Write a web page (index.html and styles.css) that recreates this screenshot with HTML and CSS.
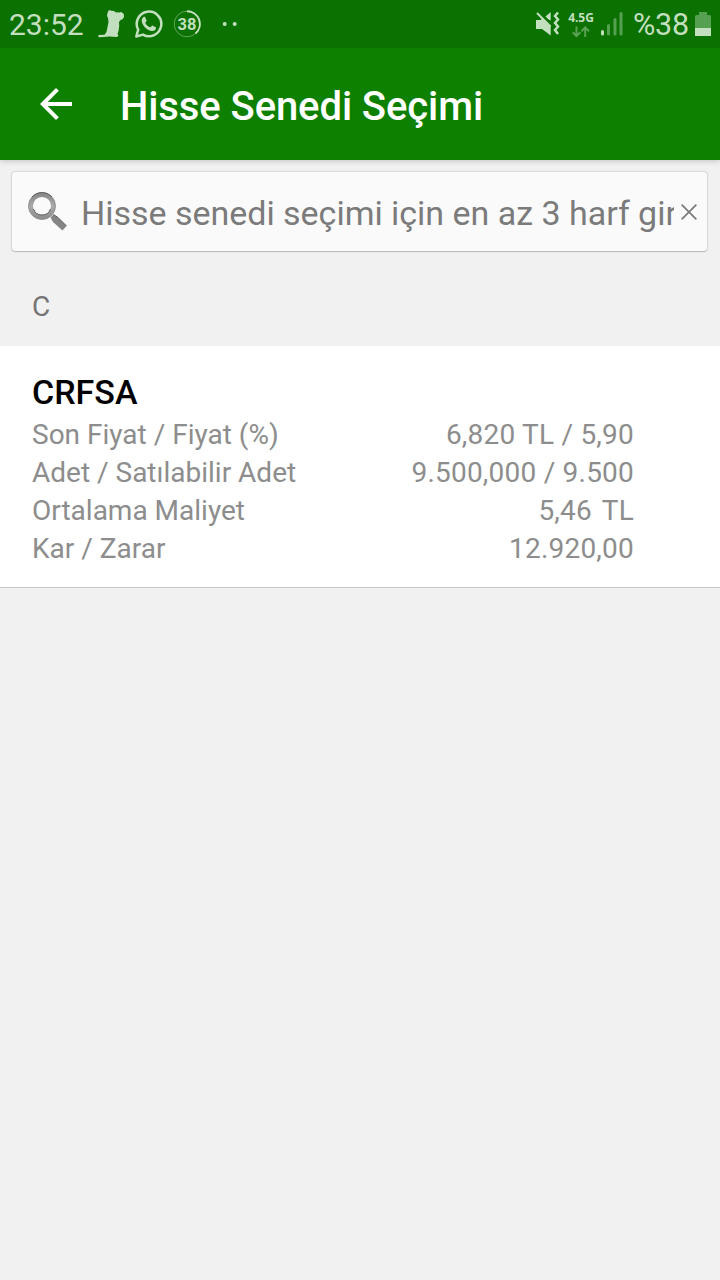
FILE: index.html
```html
<!DOCTYPE html>
<html lang="tr">
<head>
    <meta charset="UTF-8">
    <meta name="viewport" content="width=device-width, initial-scale=1.0">
    <title>Hisse Senedi Seçimi</title>
    <link rel="stylesheet" href="styles.css">
</head>
<body>

<!-- Durum çubuğu -->
<div class="status-bar">
    <span class="clock">23:52</span>
    <svg class="icon-animal" width="28" height="28" viewBox="0 0 28 28">
        <path d="M10.500 .8 L11.500 0 L13 .8 L16 1 L17.500 2.200 L21 2.500 L23.500 2 L25.800 4 L26 7 L24.500 9.300 L22.500 10 L21 12 L21.200 16 L20.500 21 L19.500 24 L20.500 25.500 L19 27 L11 26.500 L6 27 L1 27.300 L0 25.800 L1 25 L6.500 24.700 L8.500 22 L9.500 17 L10.500 12 L10 8 L9 6 L9.500 3 Z"/>
    </svg>
    <svg class="icon-whatsapp" width="30" height="30" viewBox="0 0 30 30">
        <path class="line" d="M2.300 27.500 L4.200 20.700 A12.300 12.300 0 1 1 9 25.600 Z"/>
        <path d="M10.500 7.800 C9.500 7.700 7.400 9.500 7.700 12 C8.200 16.800 13.600 21.800 18 22 C20.500 22.100 22.300 20.200 22.100 18.400 L18.400 16.500 C17.600 16.400 17 18.400 16 18.300 C14.300 18 11.600 15.200 11.300 13.800 C11.500 13 12.800 12.500 12.600 11.600 L11.200 8.200 C11 7.900 10.800 7.800 10.500 7.800 Z"/>
    </svg>
    <span class="counter">
        <svg width="28" height="28" viewBox="0 0 28 28">
            <circle class="ring" cx="14" cy="14" r="12.800"/>
            <path class="ring-part" d="M14 1.200 A12.800 12.800 0 0 1 22.500 23.600"/>
        </svg>
        <span class="counter-text">38</span>
    </span>
    <svg class="icon-dots" width="16" height="6" viewBox="0 0 16 6">
        <circle cx="2.700" cy="3" r="2"/>
        <circle cx="12.700" cy="3" r="2"/>
    </svg>

    <div class="status-right">
        <svg width="25" height="26" viewBox="0 0 25 26">
            <path d="M0 9 H4.500 L6.500 7 L14.700 15 V24.500 L6 18 H0 Z"/>
            <path d="M9.500 5.500 L14.700 1 V9.500 L12.500 8.500 Z"/>
            <path class="slash" d="M1 2 L14.500 15.500"/>
            <path class="wave" d="M22 1.500 L19 5 L22 8.500 L19 12 L22 15.500 L19 19 L22 23"/>
        </svg>
        <div class="network">
            <span class="network-type">4.5G</span>
            <svg class="arrows" width="18" height="12" viewBox="0 0 18 12">
                <path d="M4.500 .5 V10 M.7 6.200 L4.500 10 L8.300 6.200 M13.200 11 V1.500 M9.400 5.300 L13.200 1.500 L17 5.300"/>
            </svg>
        </div>
        <svg class="icon-signal" width="22" height="24" viewBox="0 0 22 24">
            <rect x="0" y="18" width="3" height="5.500" rx="1.500"/>
            <rect class="dim" x="6" y="12" width="3" height="11.500" rx="1.500"/>
            <rect class="dim" x="12.500" y="6" width="3" height="17.500" rx="1.500"/>
            <rect class="dim" x="18.500" y="0" width="3" height="23.500" rx="1.500"/>
        </svg>
        <span class="battery-text">%38</span>
        <svg class="icon-battery" width="16" height="24" viewBox="0 0 16 24">
            <path class="dim" d="M4 0 H12 V3 H14.500 Q16 3 16 4.500 V16 H0 V4.500 Q0 3 1.500 3 H4 Z"/>
            <path d="M0 16 H16 V24 H0 Z"/>
        </svg>
    </div>
</div>

<!-- Başlık -->
<header class="app-bar">
    <svg class="back" width="32" height="32" viewBox="0 0 32 32">
        <path d="M32 14 H7.660 L18.840 2.820 L16 0 L0 16 L16 32 L18.820 29.180 L7.660 18 H32 Z"/>
    </svg>
    <h1>Hisse Senedi Seçimi</h1>
</header>

<!-- Arama kutusu -->
<div class="search">
    <svg class="icon-search" width="40" height="40" viewBox="0 0 40 40">
        <defs>
            <linearGradient id="metal" x1="0" y1="0" x2="0" y2="1">
                <stop offset="0" stop-color="#8a8a8a"/>
                <stop offset=".5" stop-color="#aaa"/>
                <stop offset="1" stop-color="#909090"/>
            </linearGradient>
        </defs>
        <path class="handle" d="M22.500 25.500 L25.500 22.500 L30 25.500 L38.500 34 L34.500 38.500 L25 30 Z"/>
        <path class="handle-edge" d="M25.500 22.500 L30 25.500 L38.500 34"/>
        <circle class="lens" cx="14" cy="14" r="11.300"/>
        <circle class="lens-edge" cx="14" cy="14" r="13.500"/>
        <path class="lens-shade" d="M5.500 17 A9 9 0 0 0 22.500 17"/>
        <path class="lens-shade" d="M4 5 A13.500 13.500 0 0 1 24 5"/>
    </svg>
    <span class="search-text">Hisse senedi seçimi için en az 3 harf gir</span>
    <svg class="clear" width="16" height="16" viewBox="0 0 16 16">
        <path d="M.6 .6 L15.400 15.400 M15.400 .6 L.6 15.400"/>
    </svg>
</div>

<div class="section">C</div>

<!-- Hisse bilgileri -->
<div class="stock">
    <h2>CRFSA</h2>
    <div class="row"><span>Son Fiyat / Fiyat (%)</span><span class="value">6,820 TL / 5,90</span></div>
    <div class="row"><span>Adet / Satılabilir Adet</span><span class="value">9.500,000 / 9.500</span></div>
    <div class="row"><span>Ortalama Maliyet</span><span class="value cost">5,46  TL</span></div>
    <div class="row"><span>Kar / Zarar</span><span class="value">12.920,00</span></div>
</div>

</body>
</html>
```
FILE: styles.css
```css
* {
    margin: 0;
    padding: 0;
    box-sizing: border-box;
}
body {
    font-family: Roboto, sans-serif;
    background-color: #f1f1f1;
    min-height: 100vh;
}
svg {
    display: block;
    flex-shrink: 0;
}
.status-bar {
    display: flex;
    align-items: center;
    height: 48px;
    padding: 0 9px;
    background-color: #0b7100;
    color: #c2dfbf;
    fill: #c2dfbf;
}
.clock {
    width: 75px;
    font-size: 30px;
    line-height: 48px;
    padding-top: 2px;
}
.icon-animal {
    margin-left: 14px;
}
.icon-whatsapp {
    margin-left: 8px;
}
.line {
    fill: none;
    stroke: #c2dfbf;
    stroke-width: 2.500;
    stroke-linejoin: round;
}
.counter {
    display: grid;
    place-items: center;
    margin-left: 9px;
}
.counter > * {
    grid-area: 1 / 1;
}
.counter-text {
    padding-top: 1px;
    font-size: 16.500px;
    font-weight: 700;
    line-height: 28px;
}
.ring {
    fill: none;
    stroke: #5fa45a;
    stroke-width: 1;
}
.ring-part {
    fill: none;
    stroke: #c2dfbf;
    stroke-width: 2;
}
.icon-dots {
    margin-left: 21px;
}
.status-right {
    display: flex;
    align-items: center;
    margin-left: auto;
}
.slash {
    fill: none;
    stroke: #c2dfbf;
    stroke-width: 2;
}
.wave {
    fill: none;
    stroke: #c2dfbf;
    stroke-width: 2.500;
}
.network {
    display: flex;
    flex-direction: column;
    align-items: center;
    width: 28px;
    margin-left: 6px;
    margin-right: 1px;
}
.network-type {
    font-family: "Open Sans", sans-serif;
    font-size: 12px;
    font-weight: 700;
    line-height: 13px;
    letter-spacing: -0.1px;
}
.arrows {
    margin-top: 2px;
    fill: none;
    stroke: #5aa055;
    stroke-width: 2;
}
.icon-signal {
    margin-left: 5px;
}
.dim {
    fill: #56a051;
}
.battery-text {
    width: 56px;
    margin-left: 10px;
    font-size: 30.500px;
    line-height: 48px;
    padding-top: 2px;
    letter-spacing: -0.3px;
}
.icon-battery {
    margin-left: 6px;
}
.app-bar {
    display: flex;
    align-items: center;
    height: 112px;
    padding-left: 40px;
    background-color: #0d8000;
    color: #fff;
    box-shadow: 0 1px 6px rgba(0, 0, 0, 0.2);
    clip-path: inset(0 0 -10px 0);
}
.back {
    fill: #fff;
}
h1 {
    margin-left: 48px;
    padding-top: 5px;
    font-size: 40px;
    font-weight: 500;
    line-height: 49px;
    letter-spacing: -0.1px;
}
.search {
    display: flex;
    align-items: center;
    height: 79px;
    margin: 12px 13px 0 12px;
    padding: 0 10px 0 16px;
    background-color: #fafafa;
    border-radius: 3px;
    box-shadow: 0 0 2px rgba(0, 0, 0, 0.35), 0 1px 1px rgba(0, 0, 0, 0.15);
}
.handle {
    fill: #858585;
}
.handle-edge {
    fill: none;
    stroke: #5c5c5c;
    stroke-width: 1;
}
.lens {
    fill: none;
    stroke: url(#metal);
    stroke-width: 4.500;
}
.lens-edge {
    fill: none;
    stroke: #888;
    stroke-width: 0.800;
}
.lens-shade {
    fill: none;
    stroke: #606060;
    stroke-width: 1;
}
.search-text {
    flex: 1;
    margin-left: 13px;
    overflow: hidden;
    white-space: nowrap;
    color: #7b7b7b;
    font-size: 34px;
    line-height: 48px;
    padding-top: 2px;
    letter-spacing: -0.020px;
}
.clear {
    margin-left: 7px;
    fill: none;
    stroke: #777;
    stroke-width: 1.600;
}
.section {
    height: 95px;
    padding: 39px 32px 0;
    color: #757575;
    font-size: 28px;
    line-height: 34px;
}
.stock {
    height: 242px;
    padding: 25px 86px 0 32px;
    background-color: #fff;
    border-bottom: 1px solid #c5c5c5;
}
h2 {
    margin-bottom: 2px;
    font-size: 34px;
    font-weight: 500;
    line-height: 43px;
    color: #000;
}
.row {
    display: flex;
    justify-content: space-between;
    color: #8d8d8d;
    font-size: 28px;
    line-height: 38px;
}
.value {
    white-space: pre;
    letter-spacing: 0.220px;
}
.cost {
    word-spacing: -2px;
}
```
